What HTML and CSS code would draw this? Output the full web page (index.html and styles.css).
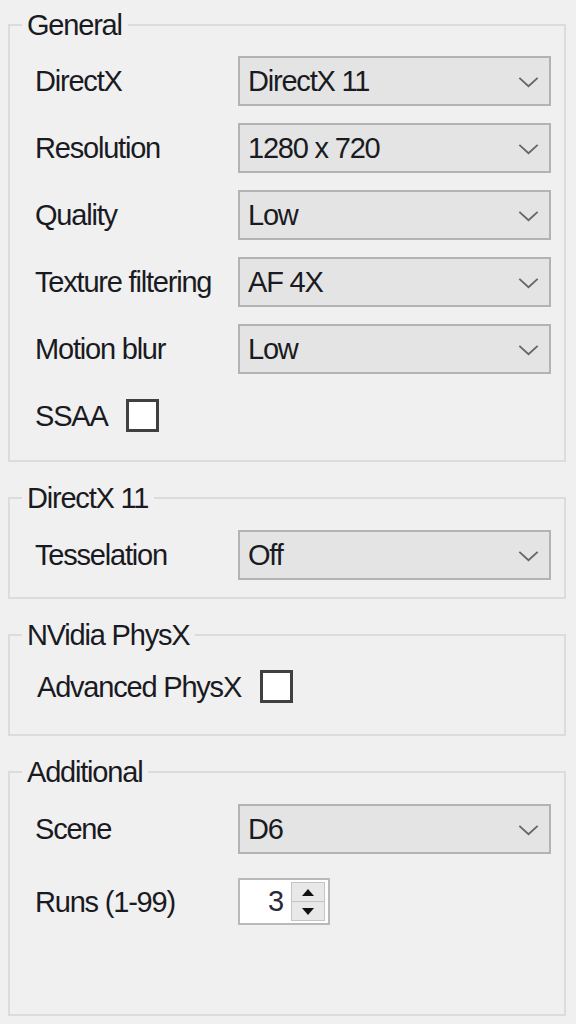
FILE: index.html
```html
<!DOCTYPE html>
<html>
<head>
<meta charset="utf-8">
<link rel="stylesheet" href="styles.css">
</head>
<body>
<div class="panel">
  <fieldset class="group g-general">
    <legend>General</legend>
    <div class="rows">
      <div class="label">DirectX</div>
      <div class="combo"><span>DirectX 11</span><svg class="chev" viewBox="0 0 22 12"><path d="M1 1 L11 10 L21 1"/></svg></div>
      <div class="label">Resolution</div>
      <div class="combo"><span>1280 x 720</span><svg class="chev" viewBox="0 0 22 12"><path d="M1 1 L11 10 L21 1"/></svg></div>
      <div class="label">Quality</div>
      <div class="combo"><span>Low</span><svg class="chev" viewBox="0 0 22 12"><path d="M1 1 L11 10 L21 1"/></svg></div>
      <div class="label">Texture filtering</div>
      <div class="combo"><span>AF 4X</span><svg class="chev" viewBox="0 0 22 12"><path d="M1 1 L11 10 L21 1"/></svg></div>
      <div class="label">Motion blur</div>
      <div class="combo"><span>Low</span><svg class="chev" viewBox="0 0 22 12"><path d="M1 1 L11 10 L21 1"/></svg></div>
    </div>
    <div class="check-row ssaa">
      <span class="label">SSAA</span>
      <span class="checkbox"></span>
    </div>
  </fieldset>

  <fieldset class="group g-dx">
    <legend>DirectX 11</legend>
    <div class="rows">
      <div class="label">Tesselation</div>
      <div class="combo"><span>Off</span><svg class="chev" viewBox="0 0 22 12"><path d="M1 1 L11 10 L21 1"/></svg></div>
    </div>
  </fieldset>

  <fieldset class="group g-physx">
    <legend>NVidia PhysX</legend>
    <div class="check-row physx">
      <span class="label">Advanced PhysX</span>
      <span class="checkbox"></span>
    </div>
  </fieldset>

  <fieldset class="group g-add">
    <legend>Additional</legend>
    <div class="rows rows-add">
      <div class="label">Scene</div>
      <div class="combo"><span>D6</span><svg class="chev" viewBox="0 0 22 12"><path d="M1 1 L11 10 L21 1"/></svg></div>
      <div class="label">Runs (1-99)</div>
      <div class="numeric">
        <span class="num-val">3</span>
        <span class="spin">
          <span class="spin-btn"><span class="tri-up"></span></span>
          <span class="spin-btn"><span class="tri-down"></span></span>
        </span>
      </div>
    </div>
  </fieldset>
</div>
</body>
</html>
```

FILE: styles.css
```css
html, body {
  margin: 0;
  padding: 0;
  background: #f0f0f0;
}
body {
  width: 576px;
  height: 1024px;
  overflow: hidden;
  font-family: "Liberation Sans", Arial, sans-serif;
  font-size: 29px;
  letter-spacing: -1.2px;
  color: #1a1a22;
}
.panel {
  padding-top: 10px;
}
.group {
  margin: 0 10px 0 8px;
  border: 2px solid #dcdcdc;
  padding: 16px 13px 28px 25px;
  min-width: 0;
}
.group + .group {
  margin-top: 21px;
}
legend {
  line-height: 30px;
  height: 30px;
  padding: 0 6px 0 5px;
  margin-left: -13px;
}
.rows {
  display: grid;
  grid-template-columns: 203px 1fr;
  row-gap: 17px;
  align-items: center;
}
.label {
  line-height: 30px;
  white-space: nowrap;
}
.combo {
  height: 50px;
  box-sizing: border-box;
  border: 2px solid #b3b3b3;
  background: #e4e4e4;
  display: flex;
  align-items: center;
  justify-content: space-between;
  padding: 0 10px 0 8px;
  line-height: 30px;
}
.chev {
  width: 21px;
  height: 11px;
  margin-top: 2px;
}
.chev path {
  fill: none;
  stroke: #666666;
  stroke-width: 2;
}
.check-row {
  display: flex;
  align-items: center;
  gap: 18px;
  height: 33px;
}
.ssaa {
  margin-top: 25px;
}
.checkbox {
  width: 33px;
  height: 33px;
  box-sizing: border-box;
  border: 3px solid #404040;
  background: #ffffff;
}
.g-dx {
  padding-top: 17px;
  padding-bottom: 17px;
}
.g-physx {
  padding-top: 20px;
  padding-bottom: 31px;
}
.physx {
  padding-left: 2px;
  gap: 19px;
}
.g-add {
  padding-top: 17px;
  padding-bottom: 89px;
}
.rows-add {
  row-gap: 24px;
}
.numeric {
  width: 92px;
  height: 47px;
  box-sizing: border-box;
  border: 2px solid #b9b9b9;
  background: #ffffff;
  display: flex;
  align-items: stretch;
  padding: 2px 3px 2px 0;
}
.num-val {
  flex: 1;
  text-align: right;
  padding-right: 8px;
  line-height: 39px;
  color: #2a2a3a;
}
.spin {
  width: 34px;
  display: flex;
  flex-direction: column;
  box-sizing: border-box;
  border: 1px solid #c4c4c4;
  background: #e8e8e8;
}
.spin-btn {
  flex: 1;
  display: flex;
  align-items: center;
  justify-content: center;
}
.spin-btn + .spin-btn {
  border-top: 1px solid #c4c4c4;
}
.tri-up {
  width: 0;
  height: 0;
  border-left: 6px solid transparent;
  border-right: 6px solid transparent;
  border-bottom: 7px solid #111111;
}
.tri-down {
  width: 0;
  height: 0;
  border-left: 6px solid transparent;
  border-right: 6px solid transparent;
  border-top: 7px solid #111111;
}
```
